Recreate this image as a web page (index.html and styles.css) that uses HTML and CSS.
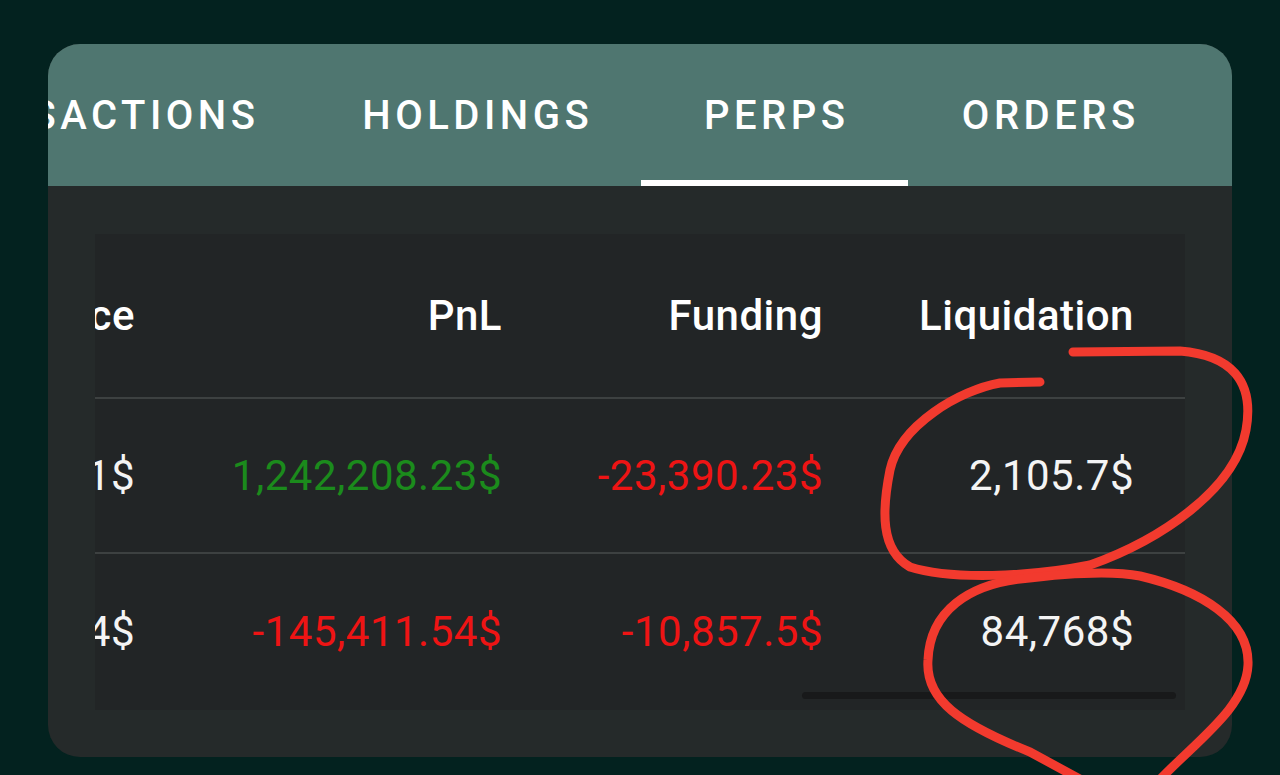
FILE: index.html
```html
<!DOCTYPE html>
<html>
<head>
<meta charset="utf-8">
<link rel="stylesheet" href="styles.css">
</head>
<body>
<div class="card">
  <div class="tabbar">
    <div class="tab tab-transactions">TRANSACTIONS</div>
    <div class="tab tab-holdings">HOLDINGS</div>
    <div class="tab tab-perps active">PERPS</div>
    <div class="tab tab-orders">ORDERS</div>
  </div>
  <div class="content">
    <div class="table">
      <div class="row head">
        <div class="cell c-price">Price</div>
        <div class="cell c-pnl">PnL</div>
        <div class="cell c-funding">Funding</div>
        <div class="cell c-liq">Liquidation</div>
      </div>
      <div class="row r1">
        <div class="cell c-price">2,411.21$</div>
        <div class="cell c-pnl pos">1,242,208.23$</div>
        <div class="cell c-funding neg">-23,390.23$</div>
        <div class="cell c-liq">2,105.7$</div>
      </div>
      <div class="row r2">
        <div class="cell c-price">97,120.04$</div>
        <div class="cell c-pnl neg">-145,411.54$</div>
        <div class="cell c-funding neg">-10,857.5$</div>
        <div class="cell c-liq">84,768$</div>
      </div>
      <div class="scrollbar"></div>
    </div>
  </div>
</div>
<svg class="marks" width="1280" height="775" viewBox="0 0 1280 775">
  <path d="M 1040 382 L 1000 383 C 960 390, 900 425, 890 470 C 882 510, 880 550, 910 567 C 950 580, 1030 577, 1090 565 C 1160 540, 1235 490, 1246 430 C 1255 380, 1230 355, 1180 351 L 1073 352"/>
  <path d="M 1100 790 L 1030 752 C 960 724, 925 700, 928 660 C 930 610, 970 585, 1020 579 C 1060 574, 1110 570, 1140 576 C 1200 590, 1250 620, 1248 665 C 1246 710, 1190 745, 1150 790"/>
</svg>
</body>
</html>
```
FILE: styles.css
```css
* { box-sizing: border-box; }
html, body {
  margin: 0;
  padding: 0;
}
body {
  width: 1280px;
  height: 775px;
  overflow: hidden;
  background: #03221f;
  font-family: Roboto, "Noto Sans", sans-serif;
  padding-top: 44px;
  padding-left: 48px;
}
.card {
  width: 1184px;
  height: 713px;
  border-radius: 32px;
  overflow: hidden;
  background: #252a2a;
  display: flex;
  flex-direction: column;
}
.tabbar {
  height: 142px;
  flex: none;
  background: #4f7670;
  display: flex;
  overflow: hidden;
}
.tab {
  flex: none;
  position: relative;
  display: flex;
  align-items: center;
  justify-content: center;
  color: #ffffff;
  font-size: 40px;
  font-weight: 500;
  letter-spacing: 4.5px;
  text-indent: 4.5px;
  white-space: nowrap;
  padding-top: 1px;
}
.tab-transactions { width: 456px; margin-left: -194px; }
.tab-holdings { width: 331px; }
.tab-perps { width: 267px; }
.tab-orders { width: 281px; }
.tab.active::after {
  content: "";
  position: absolute;
  left: 0;
  right: 0;
  bottom: 0;
  height: 6px;
  background: #ffffff;
}
.content {
  flex: 1;
  padding: 48px 47px 47px 47px;
}
.table {
  position: relative;
  height: 476px;
  background: #222526;
  overflow: hidden;
  display: flex;
  flex-direction: column;
}
.row {
  display: flex;
  align-items: center;
  padding-right: 51px;
  flex: none;
}
.row.head { height: 165px; border-bottom: 2px solid #3d4141; }
.row.r1 { height: 155px; border-bottom: 2px solid #3d4141; }
.row.r2 { height: 154px; }
.cell {
  flex: none;
  text-align: right;
  white-space: nowrap;
  font-size: 42px;
  letter-spacing: 0.5px;
  color: #f4f4f4;
}
.row.head .cell { font-weight: 500; color: #ffffff; }
.c-price { width: 300px; margin-left: -260px; }
.c-pnl { width: 367px; }
.c-funding { width: 321px; }
.c-liq { width: 311px; }
.pos { color: #1b8b1c; }
.neg { color: #ee1414; }
.scrollbar {
  position: absolute;
  left: 707px;
  top: 458px;
  width: 374px;
  height: 7px;
  border-radius: 4px;
  background: #18191a;
}
.marks {
  position: absolute;
  left: 0;
  top: 0;
  pointer-events: none;
}
.marks path {
  fill: none;
  stroke: #f23a2e;
  stroke-width: 9;
  stroke-linecap: round;
  stroke-linejoin: round;
}
```
